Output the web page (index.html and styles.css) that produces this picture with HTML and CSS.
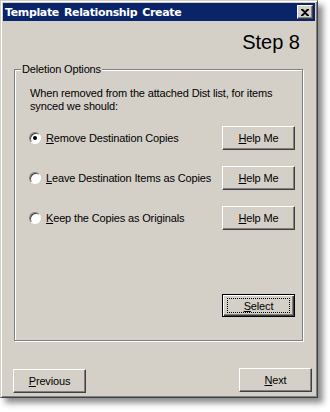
FILE: index.html
```html
<!DOCTYPE html>
<html>
<head>
<meta charset="utf-8">
<link rel="stylesheet" href="styles.css">
</head>
<body>
<div class="window">
  <div class="titlebar">
    <span class="title">Template Relationship Create</span>
    <span class="close"><svg width="8" height="7" viewBox="0 0 8 7"><path d="M0 0h2l2 2 2-2h2v1L5 3.5 8 6v1H6L4 5 2 7H0V6l3-2.5L0 1z" fill="#000"/></svg></span>
  </div>
  <div class="client">
    <div class="step">Step 8</div>
    <fieldset class="group">
      <legend>Deletion Options</legend>
      <p class="intro">When removed from the attached Dist list, for items<br>synced we should:</p>
      <div class="row">
        <label class="opt"><span class="radio checked"></span><span><u>R</u>emove Destination Copies</span></label>
        <span class="btn"><span><u>H</u>elp Me</span></span>
      </div>
      <div class="row">
        <label class="opt"><span class="radio"></span><span><u>L</u>eave Destination Items as Copies</span></label>
        <span class="btn"><span><u>H</u>elp Me</span></span>
      </div>
      <div class="row">
        <label class="opt"><span class="radio"></span><span><u>K</u>eep the Copies as Originals</span></label>
        <span class="btn"><span><u>H</u>elp Me</span></span>
      </div>
      <div class="selectrow">
        <span class="btn default"><span class="focus"><u>S</u>elect</span></span>
      </div>
    </fieldset>
    <div class="footer">
      <span class="btn prev"><span><u>P</u>revious</span></span>
      <span class="btn next"><span><u>N</u>ext</span></span>
    </div>
  </div>
</div>
</body>
</html>
```
FILE: styles.css
```css
html, body {
  margin: 0;
  padding: 0;
  background: #ffffff;
}
body {
  width: 330px;
  height: 412px;
  overflow: hidden;
  font-family: "Liberation Sans", Arial, sans-serif;
  font-size: 11px;
  letter-spacing: -0.15px;
  color: #000;
}
.window {
  box-sizing: border-box;
  width: 318px;
  height: 398px;
  background: #d4d0c8;
  border: 1px solid;
  border-color: #d4d0c8 #404040 #404040 #d4d0c8;
  box-shadow: inset 1px 1px #ffffff, inset -1px -1px #808080, 5px 5px 6px rgba(0,0,0,0.45);
  padding: 2px;
  display: flex;
  flex-direction: column;
}
.titlebar {
  height: 18px;
  background: #0a246a;
  display: flex;
  align-items: center;
  justify-content: space-between;
  padding: 0 2px 0 2px;
}
.title {
  color: #fff;
  font-family: "DejaVu Sans", Verdana, sans-serif;
  font-weight: bold;
  font-size: 11px;
  letter-spacing: -0.35px;
  word-spacing: 1.5px;
}
.close {
  box-sizing: border-box;
  width: 16px;
  height: 14px;
  background: #d4d0c8;
  border: 1px solid;
  border-color: #fff #404040 #404040 #fff;
  box-shadow: inset -1px -1px #808080;
  display: flex;
  align-items: center;
  justify-content: center;
  padding-right: 1px;
}
.client {
  flex: 1;
  display: flex;
  flex-direction: column;
  padding: 0 3px 0 10px;
}
.step {
  text-align: right;
  font-size: 20px;
  letter-spacing: 0;
  line-height: 24px;
  margin: 9px 12px 9px 0;
}
.group {
  margin: 0 9px 0 1px;
  padding: 0 7px 23px 15px;
  border: 1px solid #808080;
  box-shadow: inset 1px 1px #fff, 1px 1px #fff;
  display: block;
}
.group legend {
  padding: 0 1px;
  margin-left: -9px;
  line-height: 13px;
  background: #d4d0c8;
}
.intro {
  margin: 11px 0 13px 0;
  line-height: 13px;
  white-space: nowrap;
}
.row {
  display: flex;
  align-items: center;
  justify-content: space-between;
  height: 24px;
  margin-bottom: 16px;
}
.opt {
  display: flex;
  align-items: center;
  gap: 5px;
  margin-left: -1px;
}
.radio {
  box-sizing: border-box;
  width: 12px;
  height: 12px;
  border-radius: 50%;
  background: #fff;
  border: 1px solid;
  border-color: #808080 #ffffff #ffffff #808080;
  box-shadow: inset 1px 1px #404040;
  position: relative;
}
.radio.checked::after {
  content: "";
  position: absolute;
  left: 3px;
  top: 3px;
  width: 4px;
  height: 4px;
  border-radius: 50%;
  background: #000;
}
.btn {
  box-sizing: border-box;
  width: 73px;
  height: 24px;
  background: #d4d0c8;
  border: 1px solid;
  border-color: #fff #404040 #404040 #fff;
  box-shadow: inset -1px -1px #808080;
  display: flex;
  align-items: center;
  justify-content: center;
}
.selectrow {
  display: flex;
  justify-content: flex-end;
  padding-top: 48px;
}
.btn.default {
  height: 23px;
  border: 1px solid #000;
  box-shadow: inset 1px 1px #fff, inset -1px -1px #404040, inset -2px -2px #808080;
}
.focus {
  box-sizing: border-box;
  width: 63px;
  height: 15px;
  border: 1px dotted #000;
  display: flex;
  align-items: center;
  justify-content: center;
}
.footer {
  display: flex;
  justify-content: space-between;
  align-items: flex-end;
  margin-top: auto;
  padding-bottom: 3px;
}
.prev {
  margin-bottom: -1px;
}
```
